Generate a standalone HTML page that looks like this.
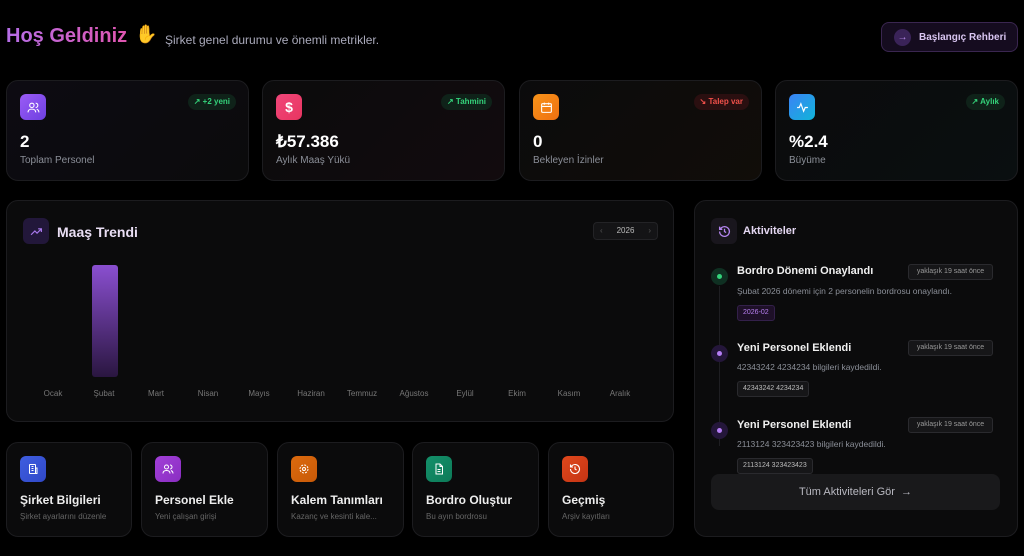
<!DOCTYPE html>
<html><head><meta charset="utf-8"><style>
*{box-sizing:border-box;margin:0;padding:0}
body{width:1024px;height:556px;background:#000;font-family:"Liberation Sans",sans-serif;color:#fff;position:relative;overflow:hidden}
.a{position:absolute}
.card{position:absolute;border:1px solid #1c1c1f;background:#0b0b0c;border-radius:12px}
.ic{position:absolute;width:26px;height:26px;border-radius:6px;display:flex;align-items:center;justify-content:center}
.badge{position:absolute;top:13px;right:12px;height:16px;border-radius:8px;font-size:8px;font-weight:bold;padding:0 6px;line-height:16px}
.val{position:absolute;left:13px;top:51px;font-size:17px;font-weight:bold}
.lbl{position:absolute;left:13px;top:74px;font-size:10px;color:#8b8f98}
.mo{position:absolute;top:389px;font-size:8px;color:#777;transform:translateX(-50%)}
.tt{position:absolute;left:737px;font-size:11px;font-weight:bold;color:#f0f0f0}
.tm{position:absolute;left:908px;width:85px;height:16px;border:1px solid #2a2a2e;background:#161618;border-radius:3px;font-size:7px;color:#999;text-align:center;line-height:14px}
.ds{position:absolute;left:737px;font-size:8.5px;color:#8b8f98}
.tg{position:absolute;left:737px;height:16px;border:1px solid #2a2a2e;background:#161618;border-radius:3px;font-size:7px;color:#bbb;padding:0 5px;line-height:14px}
.dot{position:absolute;left:711px;width:17px;height:17px;border-radius:50%;display:flex;align-items:center;justify-content:center}
.dot i{width:5px;height:5px;border-radius:50%;display:block}
.q .t{position:absolute;left:13px;top:50px;font-size:12px;font-weight:bold;color:#eee}
.q .s{position:absolute;left:13px;top:69px;font-size:8px;color:#666;white-space:nowrap}
</style></head><body>
<div class="a" style="left:6px;top:25px;font-size:20px;font-weight:bold;background:linear-gradient(90deg,#b66ee8,#e056b0);-webkit-background-clip:text;color:transparent">Hoş Geldiniz</div>
<div class="a" style="left:135px;top:24px;font-size:18px;color:#e0408a">✋</div>
<div class="a" style="left:165px;top:33px;font-size:12px;color:#aab">Şirket genel durumu ve önemli metrikler.</div>
<div class="a" style="left:881px;top:22px;width:137px;height:30px;border:1px solid #3a2650;background:#150c1f;border-radius:8px">
<div class="a" style="left:12px;top:6px;width:17px;height:17px;border-radius:50%;background:#3a2358;color:#b68ae8;font-size:10px;text-align:center;line-height:17px">→</div>
<div class="a" style="left:37px;top:9px;font-size:10px;font-weight:bold;color:#d9c6f2">Başlangıç Rehberi</div></div>

<div class="card" style="left:6px;top:80px;width:243px;height:101px;background:linear-gradient(135deg,#0d0b12,#0b0b0c)">
<div class="ic" style="left:13px;top:13px;background:linear-gradient(135deg,#9b5cf6,#6d3fe0)"><svg width="13" height="13" viewBox="0 0 24 24" fill="none" stroke="#fff" stroke-width="2"><circle cx="9" cy="8" r="4"/><path d="M2 21c0-4 3-6 7-6s7 2 7 6M16 4a4 4 0 010 8M22 21c0-3-2-5-4-6"/></svg></div>
<div class="badge" style="background:#0f2219;color:#34d27a">↗ +2 yeni</div>
<div class="val">2</div><div class="lbl">Toplam Personel</div></div>
<div class="card" style="left:262px;top:80px;width:243px;height:101px;background:linear-gradient(135deg,#0b0b0c,#120b0e)">
<div class="ic" style="left:13px;top:13px;background:linear-gradient(135deg,#f0467a,#e83560);font-size:14px;font-weight:bold">$</div>
<div class="badge" style="background:#0f2219;color:#34d27a">↗ Tahmini</div>
<div class="val">₺57.386</div><div class="lbl">Aylık Maaş Yükü</div></div>
<div class="card" style="left:519px;top:80px;width:243px;height:101px;background:linear-gradient(135deg,#0b0b0c,#110d09)">
<div class="ic" style="left:13px;top:13px;background:linear-gradient(135deg,#f7931a,#f07010)"><svg width="13" height="13" viewBox="0 0 24 24" fill="none" stroke="#fff" stroke-width="2"><rect x="3" y="5" width="18" height="16" rx="2"/><path d="M3 10h18M8 3v4M16 3v4"/></svg></div>
<div class="badge" style="background:#2a0f10;color:#f0504a">↘ Talep var</div>
<div class="val">0</div><div class="lbl">Bekleyen İzinler</div></div>
<div class="card" style="left:775px;top:80px;width:243px;height:101px;background:linear-gradient(135deg,#0b0b0c,#0a0f10)">
<div class="ic" style="left:13px;top:13px;background:linear-gradient(135deg,#3b82f6,#10b5d8)"><svg width="13" height="13" viewBox="0 0 24 24" fill="none" stroke="#fff" stroke-width="2.2"><path d="M2 12h4l3-7 5 14 3-7h5"/></svg></div>
<div class="badge" style="background:#0f2219;color:#34d27a">↗ Aylık</div>
<div class="val">%2.4</div><div class="lbl">Büyüme</div></div>

<div class="card" style="left:6px;top:200px;width:668px;height:222px">
<div class="ic" style="left:16px;top:17px;background:#22173a"><svg width="13" height="13" viewBox="0 0 24 24" fill="none" stroke="#a878ec" stroke-width="2.2"><path d="M2 18l7-7 4 4 8-8M15 7h6v6"/></svg></div>
<div class="a" style="left:50px;top:23px;font-size:14px;font-weight:bold;color:#eadff5">Maaş Trendi</div>
<div class="a" style="left:586px;top:21px;width:65px;height:18px;border:1px solid #232326;background:#141416;border-radius:4px;font-size:8px;color:#bbb;line-height:16px;text-align:center"><span style="color:#555;position:absolute;left:6px">‹</span>2026<span style="color:#555;position:absolute;right:6px">›</span></div>
<div class="a" style="left:85px;top:64px;width:26px;height:112px;border-radius:3px;background:linear-gradient(180deg,#8a4fd0,#2a1640)"></div>
</div>
<div class="mo" style="left:53px">Ocak</div><div class="mo" style="left:104px">Şubat</div><div class="mo" style="left:156px">Mart</div><div class="mo" style="left:208px">Nisan</div><div class="mo" style="left:259px">Mayıs</div><div class="mo" style="left:311px">Haziran</div><div class="mo" style="left:362px">Temmuz</div><div class="mo" style="left:414px">Ağustos</div><div class="mo" style="left:465px">Eylül</div><div class="mo" style="left:517px">Ekim</div><div class="mo" style="left:569px">Kasım</div><div class="mo" style="left:620px">Aralık</div>

<div class="card" style="left:694px;top:200px;width:324px;height:337px"></div>
<div class="ic" style="left:711px;top:218px;background:#19161d"><svg width="13" height="13" viewBox="0 0 24 24" fill="none" stroke="#b384ee" stroke-width="2.4"><path d="M3 12a9 9 0 103-6.7L3 8M3 3v5h5M12 7v5l3 2"/></svg></div>
<div class="a" style="left:743px;top:225px;font-size:11px;font-weight:bold;color:#e5d8f3">Aktiviteler</div>
<div class="a" style="left:719px;top:286px;width:1px;height:160px;background:#1e1e22"></div>
<div class="dot" style="top:268px;background:#0f3022"><i style="background:#34d27a"></i></div>
<div class="tt" style="top:265px">Bordro Dönemi Onaylandı</div><div class="tm" style="top:264px">yaklaşık 19 saat önce</div>
<div class="ds" style="top:286px">Şubat 2026 dönemi için 2 personelin bordrosu onaylandı.</div>
<div class="tg" style="top:305px;background:#1e1028;border-color:#33204a;color:#b77ef0">2026-02</div>
<div class="dot" style="top:345px;background:#24163a"><i style="background:#b57ef5"></i></div>
<div class="tt" style="top:342px">Yeni Personel Eklendi</div><div class="tm" style="top:340px">yaklaşık 19 saat önce</div>
<div class="ds" style="top:362px">42343242 4234234 bilgileri kaydedildi.</div>
<div class="tg" style="top:381px">42343242 4234234</div>
<div class="dot" style="top:422px;background:#24163a"><i style="background:#b57ef5"></i></div>
<div class="tt" style="top:419px">Yeni Personel Eklendi</div><div class="tm" style="top:417px">yaklaşık 19 saat önce</div>
<div class="ds" style="top:439px">2113124 323423423 bilgileri kaydedildi.</div>
<div class="tg" style="top:458px">2113124 323423423</div>
<div class="a" style="left:711px;top:474px;width:289px;height:36px;background:#19191b;border-radius:8px;font-size:11px;color:#b8b8c0;text-align:center;line-height:36px">Tüm Aktiviteleri Gör &nbsp;→</div>

<div class="card q" style="left:6px;top:442px;width:126px;height:95px"><div class="ic" style="left:13px;top:13px;background:linear-gradient(135deg,#3f5ee0,#3048c8)"><svg width="12" height="12" viewBox="0 0 24 24" fill="none" stroke="#fff" stroke-width="2"><rect x="5" y="3" width="12" height="18" rx="1"/><path d="M9 7h4M9 11h4M9 15h4M17 10h3v11h-3"/></svg></div><div class="t">Şirket Bilgileri</div><div class="s">Şirket ayarlarını düzenle</div></div>
<div class="card q" style="left:141px;top:442px;width:127px;height:95px"><div class="ic" style="left:13px;top:13px;background:linear-gradient(135deg,#a23fd8,#8a2ec2)"><svg width="12" height="12" viewBox="0 0 24 24" fill="none" stroke="#fff" stroke-width="2"><circle cx="9" cy="8" r="4"/><path d="M2 21c0-4 3-6 7-6s7 2 7 6M16 4a4 4 0 010 8M22 21c0-3-2-5-4-6"/></svg></div><div class="t">Personel Ekle</div><div class="s">Yeni çalışan girişi</div></div>
<div class="card q" style="left:277px;top:442px;width:127px;height:95px"><div class="ic" style="left:13px;top:13px;background:linear-gradient(135deg,#dc6a0e,#c85a08)"><svg width="12" height="12" viewBox="0 0 24 24" fill="none" stroke="#fff" stroke-width="2"><circle cx="12" cy="12" r="3"/><circle cx="12" cy="12" r="8" stroke-dasharray="4 2.3"/></svg></div><div class="t">Kalem Tanımları</div><div class="s">Kazanç ve kesinti kale...</div></div>
<div class="card q" style="left:412px;top:442px;width:127px;height:95px"><div class="ic" style="left:13px;top:13px;background:linear-gradient(135deg,#14906a,#0d7a58)"><svg width="12" height="12" viewBox="0 0 24 24" fill="none" stroke="#fff" stroke-width="2"><path d="M6 2h8l5 5v15H6zM14 2v5h5M9 13h6M9 17h6"/></svg></div><div class="t">Bordro Oluştur</div><div class="s">Bu ayın bordrosu</div></div>
<div class="card q" style="left:548px;top:442px;width:126px;height:95px"><div class="ic" style="left:13px;top:13px;background:linear-gradient(135deg,#e0481c,#c43414)"><svg width="12" height="12" viewBox="0 0 24 24" fill="none" stroke="#fff" stroke-width="2.2"><path d="M3 12a9 9 0 103-6.7L3 8M3 3v5h5M12 7v5l3 2"/></svg></div><div class="t">Geçmiş</div><div class="s">Arşiv kayıtları</div></div>
</body></html>
